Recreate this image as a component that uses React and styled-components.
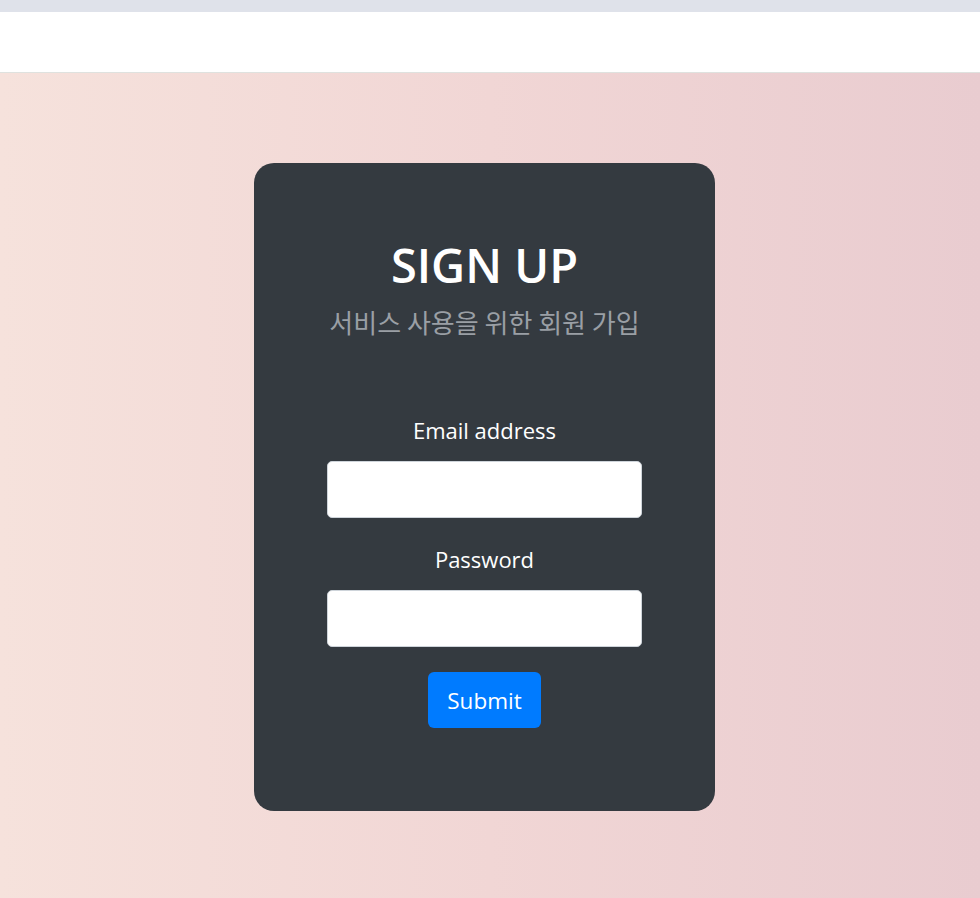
import React from "react";
import styled, { createGlobalStyle } from "styled-components";

const GlobalStyle = createGlobalStyle`
  body {
    margin: 0;
    font-family: "Open Sans", "Noto Sans", sans-serif;
  }
`;

const TopStrip = styled.div`
  height: 12px;
  background: #dfe2ea;
`;

const Header = styled.header`
  height: 60px;
  background: #ffffff;
  border-bottom: 1px solid #dfe2df;
`;

const Main = styled.main`
  min-height: 825px;
  display: flex;
  justify-content: center;
  align-items: flex-start;
  padding: 90px 11px 0 0;
  box-sizing: border-box;
  background: linear-gradient(90deg, #f6e2dc 0%, #f1d6d5 50%, #e9ccd0 100%);
`;

const Card = styled.div`
  width: 461px;
  height: 648px;
  box-sizing: border-box;
  padding: 74px 73px 0;
  border-radius: 20px;
  background: #343a40;
  text-align: center;
`;

const Title = styled.h1`
  margin: 0;
  color: #ffffff;
  font-size: 47px;
  font-weight: 600;
  line-height: 1.2;
`;

const Subtitle = styled.p`
  margin: 12px 0 0;
  color: #9a9fa5;
  font-family: "Noto Sans CJK KR", sans-serif;
  font-size: 26px;
  line-height: 1.3;
`;

const Form = styled.form`
  margin-top: 75px;
  display: flex;
  flex-direction: column;
  align-items: center;
`;

const Field = styled.div`
  width: 100%;
  margin-bottom: 25px;
`;

const Label = styled.label`
  display: block;
  margin-bottom: 14px;
  color: #ffffff;
  font-size: 22px;
  line-height: 1.5;
`;

const Input = styled.input`
  display: block;
  width: 100%;
  height: 57px;
  box-sizing: border-box;
  border: 1px solid #ced4da;
  border-radius: 5px;
  background: #ffffff;
  padding: 0 12px;
  font-size: 20px;
  outline: none;
`;

const Button = styled.button`
  width: 113px;
  height: 56px;
  border: none;
  border-radius: 6px;
  background: #007bff;
  color: #ffffff;
  font-family: inherit;
  font-size: 22.5px;
  cursor: pointer;
`;

export default function App() {
  return (
    <>
      <GlobalStyle />
      <TopStrip />
      <Header />
      <Main>
        <Card>
          <Title>SIGN UP</Title>
          <Subtitle>서비스 사용을 위한 회원 가입</Subtitle>
          <Form onSubmit={(e) => e.preventDefault()}>
            <Field>
              <Label htmlFor="email">Email address</Label>
              <Input id="email" type="email" />
            </Field>
            <Field>
              <Label htmlFor="password">Password</Label>
              <Input id="password" type="password" />
            </Field>
            <Button type="submit">Submit</Button>
          </Form>
        </Card>
      </Main>
    </>
  );
}
